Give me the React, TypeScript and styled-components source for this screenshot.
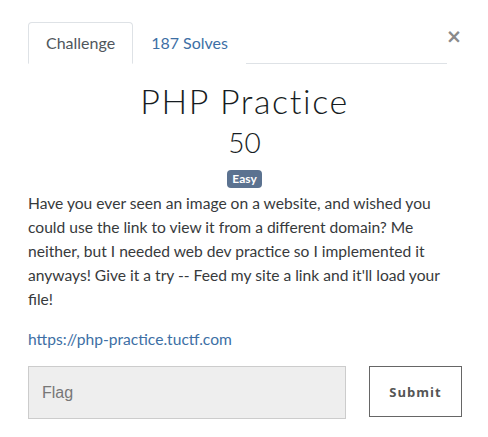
import styled, { createGlobalStyle } from "styled-components";

const Global = createGlobalStyle`
  body {
    margin: 0;
    background: #fff;
    font-family: Lato, "Noto Sans", sans-serif;
    color: #373a3c;
  }
`;

export default function App() {
  return (
    <>
      <Global />
      <Modal>
        <Header>
          <Tabs>
            <Tab active>Challenge</Tab>
            <Tab>187 Solves</Tab>
          </Tabs>
          <Close aria-label="Close">×</Close>
        </Header>
        <Title>PHP Practice</Title>
        <Value>50</Value>
        <BadgeRow>
          <Badge>Easy</Badge>
        </BadgeRow>
        <Description>
          Have you ever seen an image on a website, and wished you could use the
          link to view it from a different domain? Me neither, but I needed web
          dev practice so I implemented it anyways! Give it a try -- Feed my
          site a link and it'll load your file!
        </Description>
        <Link href="#">https://php-practice.tuctf.com</Link>
        <SubmitRow>
          <FlagInput placeholder="Flag" />
          <SubmitButton>Submit</SubmitButton>
        </SubmitRow>
      </Modal>
    </>
  );
}

const Modal = styled.div`
  width: 440px;
  padding: 22px 0 0 28px;
`;

const Header = styled.div`
  display: flex;
  align-items: flex-start;
`;

const Tabs = styled.div`
  display: flex;
  flex: 0 0 419px;
  border-bottom: 1px solid #dee2e6;
`;

const Tab = styled.div<{ active?: boolean }>`
  padding: 8px 17px 8px 17px;
  margin-bottom: -1px;
  font-size: 16px;
  line-height: 24px;
  border: 1px solid ${(p) => (p.active ? "#dee2e6" : "transparent")};
  border-bottom-color: ${(p) => (p.active ? "#fff" : "transparent")};
  border-radius: 4px 4px 0 0;
  background: #fff;
  color: ${(p) => (p.active ? "#4f565c" : "#3d6fa5")};
`;

const Close = styled.button`
  margin-left: -1px;
  margin-top: 2px;
  padding: 0;
  border: 0;
  background: none;
  font-family: "DejaVu Sans", sans-serif;
  font-size: 19px;
  line-height: 24px;
  font-weight: 700;
  color: #8a8a8a;
`;

const Title = styled.h1`
  margin: 17px 0 0;
  width: 433px;
  text-align: center;
  font-size: 34px;
  line-height: 40px;
  font-weight: 300;
  letter-spacing: 1.6px;
  color: #161c22;
`;

const Value = styled.div`
  margin-top: 4px;
  width: 433px;
  text-align: center;
  font-size: 28px;
  line-height: 34px;
  font-weight: 300;
  color: #161c22;
`;

const BadgeRow = styled.div`
  display: flex;
  justify-content: center;
  width: 433px;
  margin-top: 11px;
`;

const Badge = styled.span`
  display: inline-block;
  height: 18px;
  padding: 0 5px;
  border-radius: 4px;
  background: #5b7290;
  color: #fff;
  font-size: 12px;
  line-height: 18px;
  font-weight: 700;
`;

const Description = styled.p`
  margin: 3px 0 0;
  font-size: 15.6px;
  line-height: 24px;
  color: #373a3c;
`;

const Link = styled.a`
  display: block;
  margin-top: 16px;
  font-size: 15.6px;
  line-height: 24px;
  color: #3d6fa5;
  text-decoration: none;
`;

const SubmitRow = styled.div`
  display: flex;
  align-items: flex-start;
  margin-top: 15px;
`;

const FlagInput = styled.input`
  box-sizing: border-box;
  width: 318px;
  height: 53px;
  padding: 0 13px;
  border: 1px solid #ccc;
  background: #eee;
  font-family: "Liberation Sans", Arial, sans-serif;
  font-size: 16px;
  color: #555;
  outline: none;
  &::placeholder {
    color: #777;
  }
`;

const SubmitButton = styled.button`
  box-sizing: border-box;
  margin-left: 23px;
  width: 93px;
  height: 51px;
  border: 1px solid #666;
  background: #fff;
  font-family: "Open Sans", "Liberation Sans", sans-serif;
  font-size: 13px;
  font-weight: 700;
  letter-spacing: 1px;
  color: #555;
`;
